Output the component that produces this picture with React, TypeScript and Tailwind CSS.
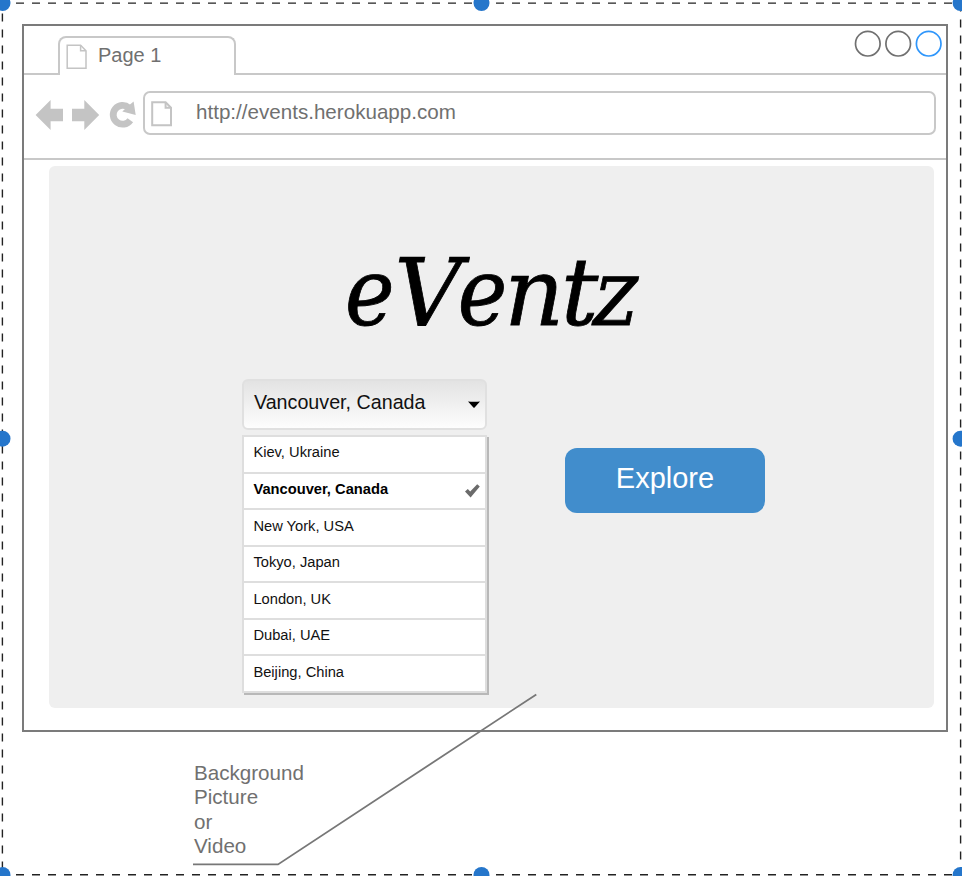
import React from "react";

const cities = [
  "Kiev, Ukraine",
  "Vancouver, Canada",
  "New York, USA",
  "Tokyo, Japan",
  "London, UK",
  "Dubai, UAE",
  "Beijing, China",
];
const selected = "Vancouver, Canada";

function PageIcon({ className }: { className: string }) {
  return (
    <svg className={className} width="22" height="26" viewBox="0 0 22 26" fill="none" stroke="#c4c4c4">
      <path d="M1.2 1.2H14.6L20 6.7V24.3H1.2Z" />
      <path d="M14.6 1.2V6.7H20" />
    </svg>
  );
}

function TabBar() {
  return (
    <div className="flex h-[49px] items-end">
      <div className="h-[2px] w-[36px] bg-[#c8c8c8]" />
      <div className="-ml-[2px] flex h-[39px] w-[178px] rounded-t-[8px] border-2 border-b-0 border-[#c8c8c8] pl-[6px]">
        <PageIcon className="mt-[6px] [stroke-width:1.5]" />
        <span className="ml-[10px] mt-[5px] text-[20px] leading-6">Page 1</span>
      </div>
      <div className="h-[2px] flex-1 bg-[#c8c8c8]" />
    </div>
  );
}

function WindowButtons() {
  return (
    <div className="absolute right-[4px] top-[4px]">
      <svg width="88" height="28" viewBox="0 0 88 28" fill="none" strokeWidth="1.7">
        <circle cx="13.8" cy="13.7" r="12.3" stroke="#707070" />
        <circle cx="44.2" cy="13.7" r="12.3" stroke="#707070" />
        <circle cx="74.7" cy="13.7" r="12.3" stroke="#2f96fb" />
      </svg>
    </div>
  );
}

function Toolbar() {
  return (
    <div className="flex h-[85px] border-b-2 border-[#c8c8c8] pl-[11px] pt-[16px]">
      <svg className="mt-[8px] shrink-0" width="103" height="32" viewBox="0 0 103 32" fill="#c4c4c4">
        <path d="M.6 16 15.6 1V9.8H28V22.2H15.6V31Z" />
        <path d="M64.2 16 49.3 1V9.8H37V22.2H49.3V31Z" />
        <path d="M95.3 21.2A9.4 9.4 0 1 1 93.8 8.7" fill="none" stroke="#c4c4c4" strokeWidth="6.8" />
        <path d="M98.6 2.6 100.7 16 87.3 12.4 92 8Z" />
      </svg>
      <div className="ml-[5px] flex h-[44px] w-[793px] rounded-[7px] border-2 border-[#c8c8c8] pl-[6px]">
        <PageIcon className="mt-[8px] [stroke-width:2]" />
        <span className="ml-[23px] mt-[7px] text-[20.6px] leading-6">http://events.herokuapp.com</span>
      </div>
    </div>
  );
}

function CitySelect() {
  return (
    <div className="w-[245px] text-[#111]">
      <div className="flex h-[51px] items-start rounded-[6px] border-2 border-[#e0e0e0] bg-linear-to-b from-[#e3e3e3] to-[#fdfdfd] pl-[10px] pt-[9px]">
        <span className="w-[214px] text-[19.7px] leading-6">{selected}</span>
        <svg className="mt-[11px]" width="12" height="7" viewBox="0 0 12 7" fill="#000">
          <path d="M0 .6Q6 1 12 .6L6.6 6.4Q6 7 5.4 6.4Z" />
        </svg>
      </div>
      <ul className="mt-[5px] h-[258px] border-2 border-b-0 border-[#dedede] bg-white shadow-[2px_2px_0_#b8b8b8]">
        {cities.map((city) => (
          <li key={city} className="flex h-[36.57px] border-b-2 border-[#dedede] pl-[9.4px] pt-[5.4px]">
            <span className={city === selected ? "w-[212px] text-[14.7px] font-bold leading-5 text-black" : "text-[14.7px] leading-5"}>
              {city}
            </span>
            {city === selected && (
              <svg className="mt-[5px]" width="15" height="14" viewBox="0 0 15 14" fill="#6b6b6b">
                <path d="M0 7.6 2.8 5 5.2 7.6 12.2 .3 14.8 2.4 5.6 13.6Z" />
              </svg>
            )}
          </li>
        ))}
      </ul>
    </div>
  );
}

function SelectionFrame() {
  const handles = [
    [2.5, 3], [481.5, 3], [960.6, 3],
    [2.5, 438.7], [960.6, 438.7],
    [2.5, 875], [481.5, 875], [960.6, 875],
  ];
  return (
    <svg className="pointer-events-none absolute inset-0" width="962" height="876" viewBox="0 0 962 876" fill="none">
      <g stroke="#222" strokeWidth="1.4" strokeDasharray="8 8">
        <path d="M0 3.1H962" />
        <path d="M0 874.7H962" />
        <path d="M2.4 -2.5V876" />
        <path d="M960.6 3.5V876" />
      </g>
      <path d="M193 864.4H278L536.3 694.4" stroke="#777" strokeWidth="1.8" />
      {handles.map(([x, y]) => (
        <circle key={x + "-" + y} cx={x} cy={y} r="8" fill="#2576cb" />
      ))}
    </svg>
  );
}

function Logo() {
  return (
    <h1 className="h-[213px] whitespace-nowrap pl-[296px] pt-[72px] font-['DejaVu_Serif',serif] text-[93px] italic leading-[110px] text-black [-webkit-text-stroke:0.8px_black]">
      <span className="[font-stretch:condensed]">e</span>
      <span className="tracking-[-4px]">V</span>
      <span className="tracking-[-3px] [font-stretch:condensed]">e</span>
      <span className="tracking-[-3px]">n</span>
      <span className="tracking-[-3px]">t</span>
      <span className="inline-block -skew-x-12 not-italic [font-stretch:condensed]">z</span>
    </h1>
  );
}

export default function App() {
  return (
    <div className="relative h-[876px] w-[962px] overflow-hidden bg-white pl-[22px] pt-[24px] font-['Liberation_Sans',Arial,sans-serif] text-[#707070]">
      <div className="relative h-[708px] w-[926px] border-2 border-[#7b7b7b]">
        <TabBar />
        <WindowButtons />
        <Toolbar />
        <main className="ml-[25px] mt-[6px] h-[542px] w-[885px] rounded-[6px] bg-[#efefef]">
          <Logo />
          <div className="flex pl-[193px]">
            <CitySelect />
            <button className="ml-[78px] mt-[69px] h-[65px] w-[200px] rounded-[12px] bg-[#418dcc] pb-[5px] text-[29px] leading-8 text-white">
              Explore
            </button>
          </div>
        </main>
      </div>
      <p className="ml-[172px] mt-[29px] w-[120px] text-[20.6px] leading-[24.3px]">
        Background
        <br />
        Picture
        <br />
        or
        <br />
        Video
      </p>
      <SelectionFrame />
    </div>
  );
}
